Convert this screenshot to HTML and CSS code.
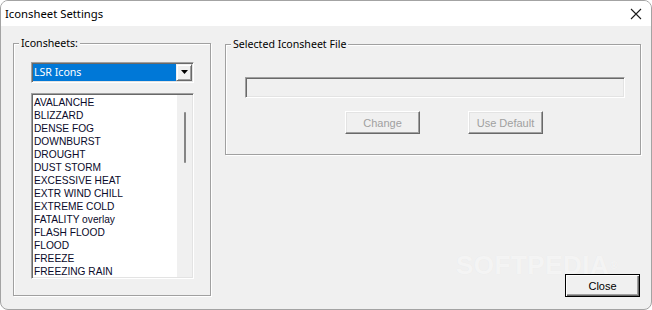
FILE: index.html
```html
<!DOCTYPE html>
<html>
<head>
<meta charset="utf-8">
<link rel="stylesheet" href="styles.css">
</head>
<body>
<div class="window">
  <div class="titlebar">
    <span class="title">Iconsheet Settings</span>
    <svg class="close-x" width="12" height="12" viewBox="0 0 12 12"><path d="M1 1 L11 11 M11 1 L1 11" stroke="#1a1a1a" stroke-width="1.1" fill="none"/></svg>
  </div>
  <div class="client">
    <div class="group group-left">
      <span class="legend">Iconsheets:</span>
      <div class="combo">
        <div class="combo-sel">LSR Icons</div>
        <div class="combo-btn"><svg width="8" height="5" viewBox="0 0 8 5"><path d="M0 0 H7 L3.5 4 Z" fill="#000"/></svg></div>
      </div>
      <div class="listbox">
        <ul class="items">
          <li>AVALANCHE</li>
          <li>BLIZZARD</li>
          <li>DENSE FOG</li>
          <li>DOWNBURST</li>
          <li>DROUGHT</li>
          <li>DUST STORM</li>
          <li>EXCESSIVE HEAT</li>
          <li>EXTR WIND CHILL</li>
          <li>EXTREME COLD</li>
          <li>FATALITY overlay</li>
          <li>FLASH FLOOD</li>
          <li>FLOOD</li>
          <li>FREEZE</li>
          <li>FREEZING RAIN</li>
        </ul>
        <div class="vscroll"><div class="thumb"></div></div>
      </div>
    </div>
    <div class="right-col">
      <div class="group group-right">
        <span class="legend">Selected Iconsheet File</span>
        <div class="field"></div>
        <div class="btnrow">
          <button class="btn" disabled>Change</button>
          <button class="btn" disabled>Use Default</button>
        </div>
      </div>
      <button class="btn btn-default">Close</button>
    </div>
  </div>
  <div class="watermark">SOFTPEDIA<span class="reg">®</span></div>
</div>
</body>
</html>
```

FILE: styles.css
```css
* { box-sizing: border-box; }
html, body { margin: 0; padding: 0; background: #ffffff; }
.window {
  position: relative;
  width: 652px;
  height: 310px;
  border: 1px solid #a3a3a3;
  border-radius: 8px;
  overflow: hidden;
  background: #f0f0f0;
  display: flex;
  flex-direction: column;
}
.titlebar {
  height: 25px;
  flex: none;
  background: #ffffff;
  display: flex;
  align-items: center;
  justify-content: space-between;
  padding: 0 9px 1px 4px;
}
.title {
  font-family: "Noto Sans", "Open Sans", sans-serif;
  font-size: 11.3px;
  color: #000;
}
.close-x { display: block; margin-top: 2px; }
.client {
  flex: 1;
  display: flex;
  padding: 17px 0 0 12px;
}
.group {
  position: relative;
  border: 1px solid #a0a0a0;
  box-shadow: 1px 1px 0 #ffffff, inset 1px 1px 0 #ffffff;
}
.legend {
  position: absolute;
  top: -9px;
  left: 5px;
  padding: 0 2px;
  background: #f0f0f0;
  font-family: "Noto Sans", "Open Sans", sans-serif;
  font-size: 10.6px;
  line-height: 16px;
  color: #000;
  white-space: nowrap;
}
.group-left {
  width: 198px;
  height: 253px;
  flex: none;
  padding: 18px 0 0 17px;
}
.combo {
  width: 163px;
  height: 21px;
  border: 1px solid;
  border-color: #a0a0a0 #ffffff #ffffff #a0a0a0;
  box-shadow: inset 1px 1px 0 #696969, inset -1px -1px 0 #e3e3e3;
  padding: 1px;
  display: flex;
  background: #fff;
}
.combo-sel {
  flex: 1;
  background: #0078d7;
  color: #fff;
  font-family: "Noto Sans", "Open Sans", sans-serif;
  font-size: 10.6px;
  line-height: 17px;
  padding-left: 1px;
}
.combo-btn {
  width: 16px;
  background: #f0f0f0;
  border: 1px solid;
  border-color: #f0f0f0 #696969 #696969 #f0f0f0;
  box-shadow: inset 1px 1px 0 #ffffff, inset -1px -1px 0 #a0a0a0;
  display: flex;
  align-items: center;
  justify-content: center;
}
.combo-btn svg { display: block; margin-left: 1px; }
.listbox {
  margin-top: 10px;
  width: 163px;
  height: 186px;
  border: 1px solid;
  border-color: #a0a0a0 #ffffff #ffffff #a0a0a0;
  box-shadow: inset 1px 1px 0 #696969, inset -1px -1px 0 #e3e3e3;
  padding: 1px;
  display: flex;
  background: #ffffff;
  overflow: hidden;
}
.items {
  list-style: none;
  margin: 0;
  padding: 1px 0 0 1px;
  flex: 1;
  font-family: "Liberation Sans", Arial, sans-serif;
  font-size: 10.2px;
  line-height: 13px;
  color: #0a0a2a;
}
.items li { white-space: nowrap; height: 13px; }
.vscroll {
  width: 15px;
  flex: none;
  background: #f0f0f0;
  padding: 17px 0 0 7px;
}
.thumb {
  width: 2px;
  height: 51px;
  border-radius: 1px;
  background: #858585;
}
.right-col {
  width: 416px;
  margin-left: 14px;
  padding-top: 1px;
  height: 254px;
  display: flex;
  flex-direction: column;
}
.group-right {
  height: 111px;
  padding: 32px 0 0 19px;
}
.field {
  width: 380px;
  height: 21px;
  border: 1px solid;
  border-color: #a0a0a0 #ffffff #ffffff #a0a0a0;
  box-shadow: inset 1px 1px 0 #696969, inset -1px -1px 0 #e3e3e3;
  background: #f0f0f0;
}
.btnrow {
  display: flex;
  gap: 48px;
  margin-top: 13px;
  padding-left: 100px;
}
.btn {
  width: 75px;
  height: 23px;
  margin: 0;
  padding: 0;
  background: #f0f0f0;
  border: 1px solid;
  border-color: #ffffff #696969 #696969 #ffffff;
  box-shadow: inset -1px -1px 0 #a0a0a0, inset 1px 1px 0 #e3e3e3;
  font-family: "Liberation Sans", Arial, sans-serif;
  font-size: 11px;
  color: #000;
  text-align: center;
}
.btn:disabled { color: #a0a0a0; }
.btn-default {
  margin-top: auto;
  margin-right: 1px;
  align-self: flex-end;
  border: 1px solid #000;
  box-shadow: inset 1px 1px 0 #ffffff, inset -1px -1px 0 #696969, inset -2px -2px 0 #a0a0a0;
}
.watermark {
  position: absolute;
  left: 455px;
  top: 255px;
  font-family: "Liberation Sans", Arial, sans-serif;
  font-weight: bold;
  font-size: 26px;
  line-height: 19px;
  letter-spacing: 0.5px;
  color: rgba(255, 255, 255, 0.6);
  text-shadow: 0 0 1px rgba(0, 0, 0, 0.05);
  pointer-events: none;
}
.watermark .reg {
  font-size: 10px;
  vertical-align: top;
  margin-left: 1px;
}
```
